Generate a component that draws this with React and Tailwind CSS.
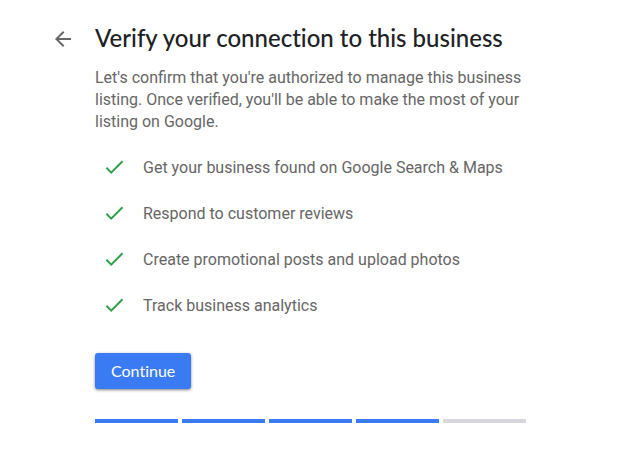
const benefits = [
  'Get your business found on Google Search & Maps',
  'Respond to customer reviews',
  'Create promotional posts and upload photos',
  'Track business analytics',
];

const TOTAL_STEPS = 5;
const CURRENT_STEP = 4;

function BackIcon() {
  return (
    <svg viewBox="0 0 24 24" className="size-6 fill-[#666]" aria-hidden="true">
      <path d="M20 11H7.83l5.59-5.59L12 4l-8 8 8 8 1.41-1.41L7.83 13H20v-2z" />
    </svg>
  );
}

function CheckIcon() {
  return (
    <svg viewBox="0 0 24 24" className="size-6 shrink-0 fill-[#2fa14c]" aria-hidden="true">
      <path d="M8.2 15.2L4.1 11.1l-1.4 1.4L8.2 18 20.2 6l-1.4-1.4z" />
    </svg>
  );
}

export default function App() {
  return (
    <main className="min-h-screen bg-white pt-6 pr-8 pl-[51px] font-[Roboto,sans-serif] text-base text-[#666]">
      <div className="flex items-start gap-5">
        <button type="button" aria-label="Back" className="mt-[3px] shrink-0">
          <BackIcon />
        </button>
        <div className="w-full max-w-[431px]">
          <h1 className="font-[Lato,sans-serif] text-2xl leading-7 font-medium whitespace-nowrap text-[#202124] [font-variant-ligatures:none]">
            Verify your connection to this business
          </h1>
          <p className="mt-[15px] leading-[22px]">
            Let's confirm that you're authorized to manage this business listing. Once verified,
            you'll be able to make the most of your listing on Google.
          </p>
          <ul className="mt-[23px] flex flex-col gap-[22px] pl-2">
            {benefits.map((benefit) => (
              <li key={benefit} className="flex items-center gap-4 leading-6">
                <CheckIcon />
                {benefit}
              </li>
            ))}
          </ul>
          <button
            type="button"
            className="mt-[35px] h-9 rounded-[3px] bg-[#3a7af2] px-4 font-[Lato,sans-serif] text-base text-white shadow-[0_1px_3px_rgba(0,0,0,0.5)] [font-variant-ligatures:none]"
          >
            Continue
          </button>
          <div
            role="progressbar"
            aria-label="Progress"
            aria-valuemin={0}
            aria-valuemax={TOTAL_STEPS}
            aria-valuenow={CURRENT_STEP}
            className="mt-[30px] grid grid-cols-5 gap-1"
          >
            {Array.from({ length: TOTAL_STEPS }, (_, i) => (
              <span key={i} className={i < CURRENT_STEP ? 'h-1 bg-[#3a7af2]' : 'h-1 bg-[#d6d6dc]'} />
            ))}
          </div>
        </div>
      </div>
    </main>
  );
}
